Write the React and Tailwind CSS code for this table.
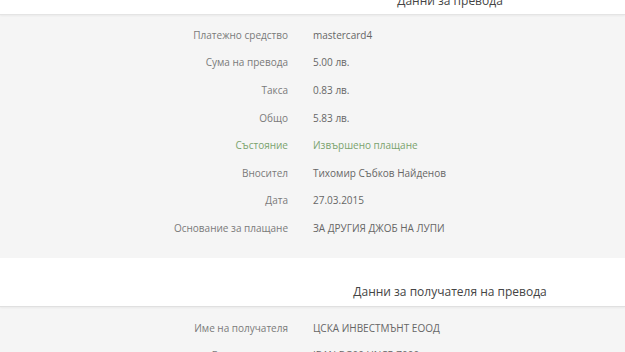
import React from 'react';

const transferRows = [
  { label: 'Платежно средство', value: 'mastercard4' },
  { label: 'Сума на превода', value: '5.00 лв.' },
  { label: 'Такса', value: '0.83 лв.' },
  { label: 'Общо', value: '5.83 лв.' },
  { label: 'Състояние', value: 'Извършено плащане', green: true },
  { label: 'Вносител', value: 'Тихомир Събков Найденов' },
  { label: 'Дата', value: '27.03.2015' },
  { label: 'Основание за плащане', value: 'ЗА ДРУГИЯ ДЖОБ НА ЛУПИ' },
];

const recipientRows = [
  { label: 'Име на получателя', value: 'ЦСКА ИНВЕСТМЪНТ ЕООД' },
  { label: 'Банкова сметка', value: 'IBAN BG00 UNCR 7000' },
];

const Row = ({ label, value, green }) => (
  <div className="flex items-center h-[27.6px]">
    <div className={`w-[288px] shrink-0 text-right ${green ? 'text-[#7aa36e]' : 'text-[#7a7a7a]'}`}>{label}</div>
    <div className={`pl-[25px] ${green ? 'text-[#7aa36e]' : 'text-[#666]'}`}>{value}</div>
  </div>
);

const App = () => {
  return (
    <div className="w-[625px] h-[352px] overflow-hidden bg-[#f5f5f5] text-[10px] leading-none" style={{ fontFamily: '"Open Sans", "Noto Sans", sans-serif' }}>
      {/* top header, mostly scrolled off */}
      <div className="h-[15px] bg-white border-b border-[#e4e4e4] shadow-[0_1px_2px_rgba(0,0,0,0.05)] flex items-end justify-center pl-[275px] overflow-hidden">
        <div className="text-[12px] text-[#444] leading-[16px] mb-[5px]">Данни за превода</div>
      </div>

      <div className="pt-[6px] pb-[16px]">
        {transferRows.map(r => (
          <Row key={r.label} {...r} />
        ))}
      </div>

      <div className="h-[49px] bg-white border-b border-[#e0e0e0] shadow-[0_1px_2px_rgba(0,0,0,0.05)] flex items-end justify-center pl-[275px] pb-[6px]">
        <div className="text-[12px] text-[#444] leading-[16px]">Данни за получателя на превода</div>
      </div>

      <div className="pt-[7px]">
        {recipientRows.map(r => (
          <Row key={r.label} {...r} />
        ))}
      </div>
    </div>
  );
};

export default App;
